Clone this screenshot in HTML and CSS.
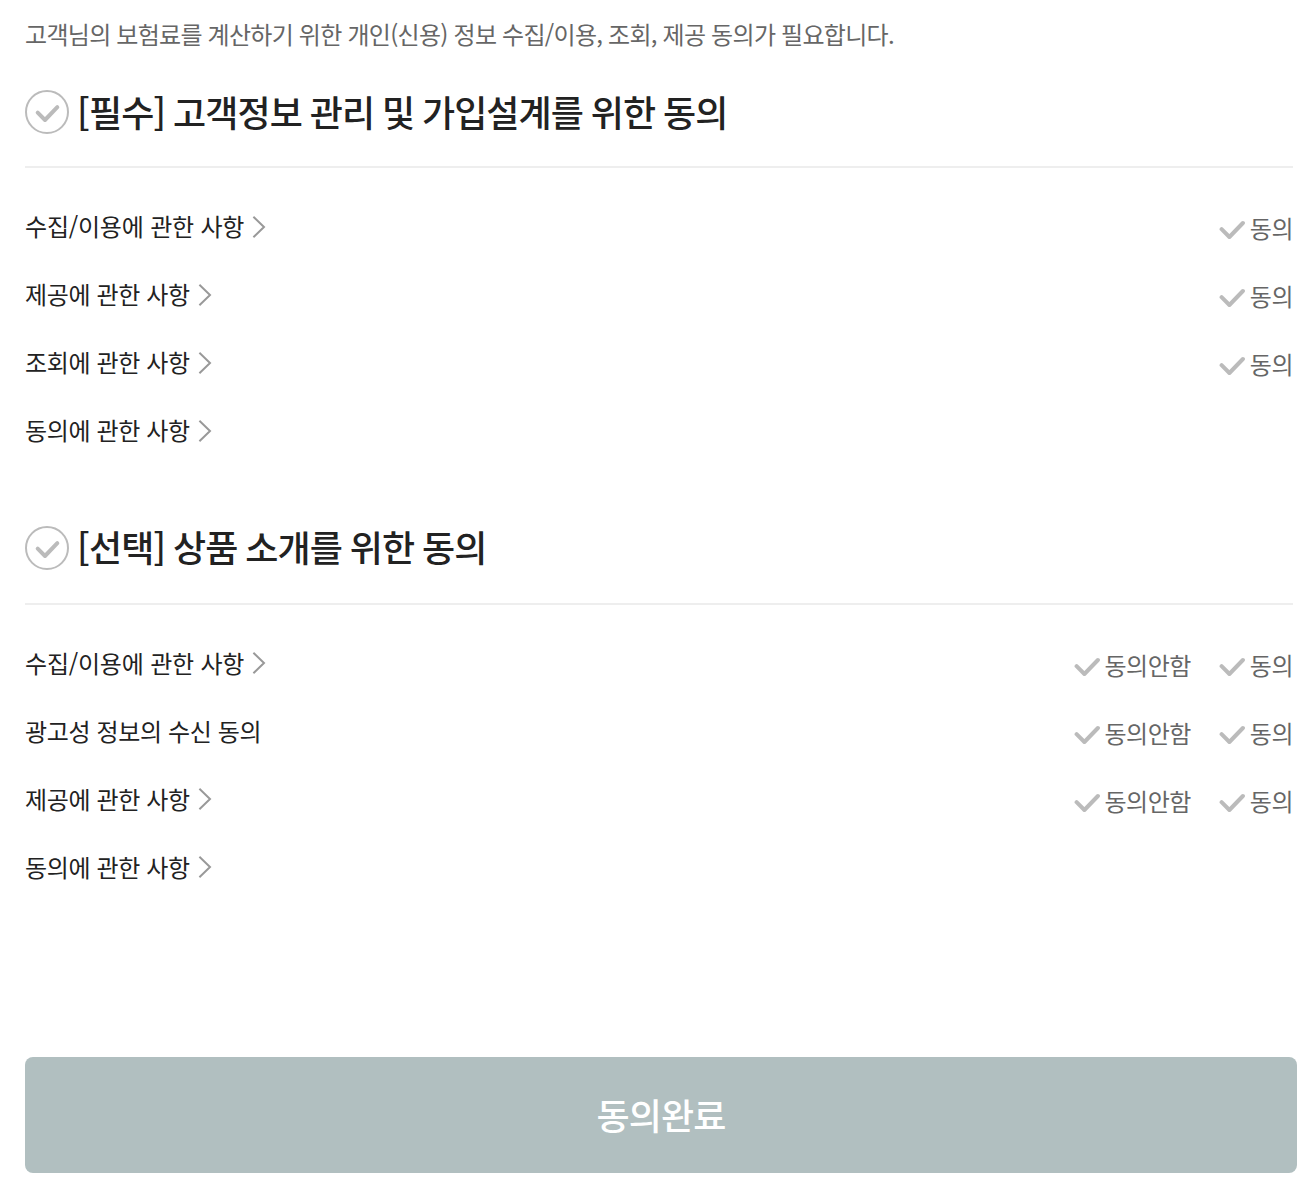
FILE: index.html
```
<!DOCTYPE html>
<html lang="ko">
<head>
    <meta charset="UTF-8">
    <meta name="viewport" content="width=device-width, initial-scale=1.0">
    <title>개인(신용)정보 동의</title>
    <link rel="stylesheet" href="styles.css">
</head>
<body>
    <svg class="defs">
        <symbol id="check" viewBox="0 0 26 20">
            <path d="M2.6 9.2 L10.4 17 L23.9 3"/>
        </symbol>
        <symbol id="arrow" viewBox="0 0 14 22">
            <path d="M1.4 0.8 L12 11 L1.4 21.2"/>
        </symbol>
        <symbol id="circle-check" viewBox="0 0 44 44">
            <circle cx="22" cy="22" r="21"/>
            <path d="M12.7 22.7 L20 30 L32.3 17.2"/>
        </symbol>
    </svg>

    <div class="container">
        <p class="intro">고객님의 보험료를 계산하기 위한 개인(신용) 정보 수집/이용, 조회, 제공 동의가 필요합니다.</p>

        <section class="terms required">
            <h2 class="terms-title"><svg class="icon-circle"><use href="#circle-check"/></svg><span>[필수] 고객정보 관리 및 가입설계를 위한 동의</span></h2>
            <ul class="terms-list">
                <li>
                    <a class="term">수집/이용에 관한 사항<svg class="icon-arrow"><use href="#arrow"/></svg></a>
                    <div class="choices">
                        <label class="choice"><svg class="icon-check"><use href="#check"/></svg>동의</label>
                    </div>
                </li>
                <li>
                    <a class="term">제공에 관한 사항<svg class="icon-arrow"><use href="#arrow"/></svg></a>
                    <div class="choices">
                        <label class="choice"><svg class="icon-check"><use href="#check"/></svg>동의</label>
                    </div>
                </li>
                <li>
                    <a class="term">조회에 관한 사항<svg class="icon-arrow"><use href="#arrow"/></svg></a>
                    <div class="choices">
                        <label class="choice"><svg class="icon-check"><use href="#check"/></svg>동의</label>
                    </div>
                </li>
                <li>
                    <a class="term">동의에 관한 사항<svg class="icon-arrow"><use href="#arrow"/></svg></a>
                </li>
            </ul>
        </section>

        <section class="terms optional">
            <h2 class="terms-title"><svg class="icon-circle"><use href="#circle-check"/></svg><span>[선택] 상품 소개를 위한 동의</span></h2>
            <ul class="terms-list">
                <li>
                    <a class="term">수집/이용에 관한 사항<svg class="icon-arrow"><use href="#arrow"/></svg></a>
                    <div class="choices">
                        <label class="choice"><svg class="icon-check"><use href="#check"/></svg>동의안함</label>
                        <label class="choice"><svg class="icon-check"><use href="#check"/></svg>동의</label>
                    </div>
                </li>
                <li>
                    <span class="term">광고성 정보의 수신 동의</span>
                    <div class="choices">
                        <label class="choice"><svg class="icon-check"><use href="#check"/></svg>동의안함</label>
                        <label class="choice"><svg class="icon-check"><use href="#check"/></svg>동의</label>
                    </div>
                </li>
                <li>
                    <a class="term">제공에 관한 사항<svg class="icon-arrow"><use href="#arrow"/></svg></a>
                    <div class="choices">
                        <label class="choice"><svg class="icon-check"><use href="#check"/></svg>동의안함</label>
                        <label class="choice"><svg class="icon-check"><use href="#check"/></svg>동의</label>
                    </div>
                </li>
                <li>
                    <a class="term">동의에 관한 사항<svg class="icon-arrow"><use href="#arrow"/></svg></a>
                </li>
            </ul>
        </section>

        <button type="button" class="submit">동의완료</button>
    </div>
</body>
</html>
```
FILE: styles.css
```
* {
    box-sizing: border-box;
    margin: 0;
    padding: 0;
}
body {
    background: #fff;
    color: #222;
    font-family: "Noto Sans CJK KR", sans-serif;
    font-size: 24px;
    letter-spacing: -0.5px;
}
.defs {
    display: none;
}
svg {
    flex: none;
    fill: none;
    stroke: #bbb;
    stroke-width: 4;
    stroke-linecap: round;
    stroke-linejoin: round;
}
.container {
    padding: 16px 17px 0 25px;
}
.intro {
    height: 74px;
    line-height: 36px;
    letter-spacing: -0.7px;
    word-spacing: -0.25px;
    color: #666;
}
.terms {
    padding-right: 4px;
}
.terms-title {
    display: flex;
    height: 78px;
    border-bottom: 2px solid #eee;
    font-size: 36px;
    font-weight: 500;
    line-height: 42px;
    letter-spacing: -0.9px;
    word-spacing: -1.4px;
}
.icon-circle {
    width: 44px;
    height: 44px;
    margin-right: 8px;
}
#circle-check circle {
    stroke-width: 2;
}
.terms-list {
    list-style: none;
    padding-top: 25px;
}
.terms-list li {
    display: flex;
    justify-content: space-between;
    height: 68px;
}
.term {
    display: flex;
    align-items: center;
    height: 68px;
    padding-bottom: 4px;
    letter-spacing: -0.36px;
}
.terms-list li:first-child .term {
    letter-spacing: -0.2px;
}
.icon-arrow {
    width: 14px;
    height: 22px;
    margin-top: 4px;
    margin-left: 8px;
    stroke: #999;
    stroke-width: 2;
    stroke-linecap: butt;
    stroke-linejoin: miter;
}
.choices {
    display: flex;
    gap: 28px;
    height: 68px;
    color: #666;
}
.choice {
    display: flex;
    align-items: center;
}
.icon-check {
    width: 26px;
    height: 20px;
    margin-top: 5px;
    margin-right: 5px;
}
.optional {
    padding-top: 61px;
}
.optional .terms-title {
    height: 79px;
    line-height: 40px;
}
.optional .icon-arrow {
    margin-top: 2px;
}
.submit {
    display: block;
    width: 100%;
    height: 116px;
    margin-top: 155px;
    padding-bottom: 2px;
    border: none;
    border-radius: 8px;
    background: #b1bfc0;
    color: #fff;
    font-family: inherit;
    font-size: 36px;
    font-weight: 500;
    letter-spacing: -0.9px;
    cursor: pointer;
}
```
